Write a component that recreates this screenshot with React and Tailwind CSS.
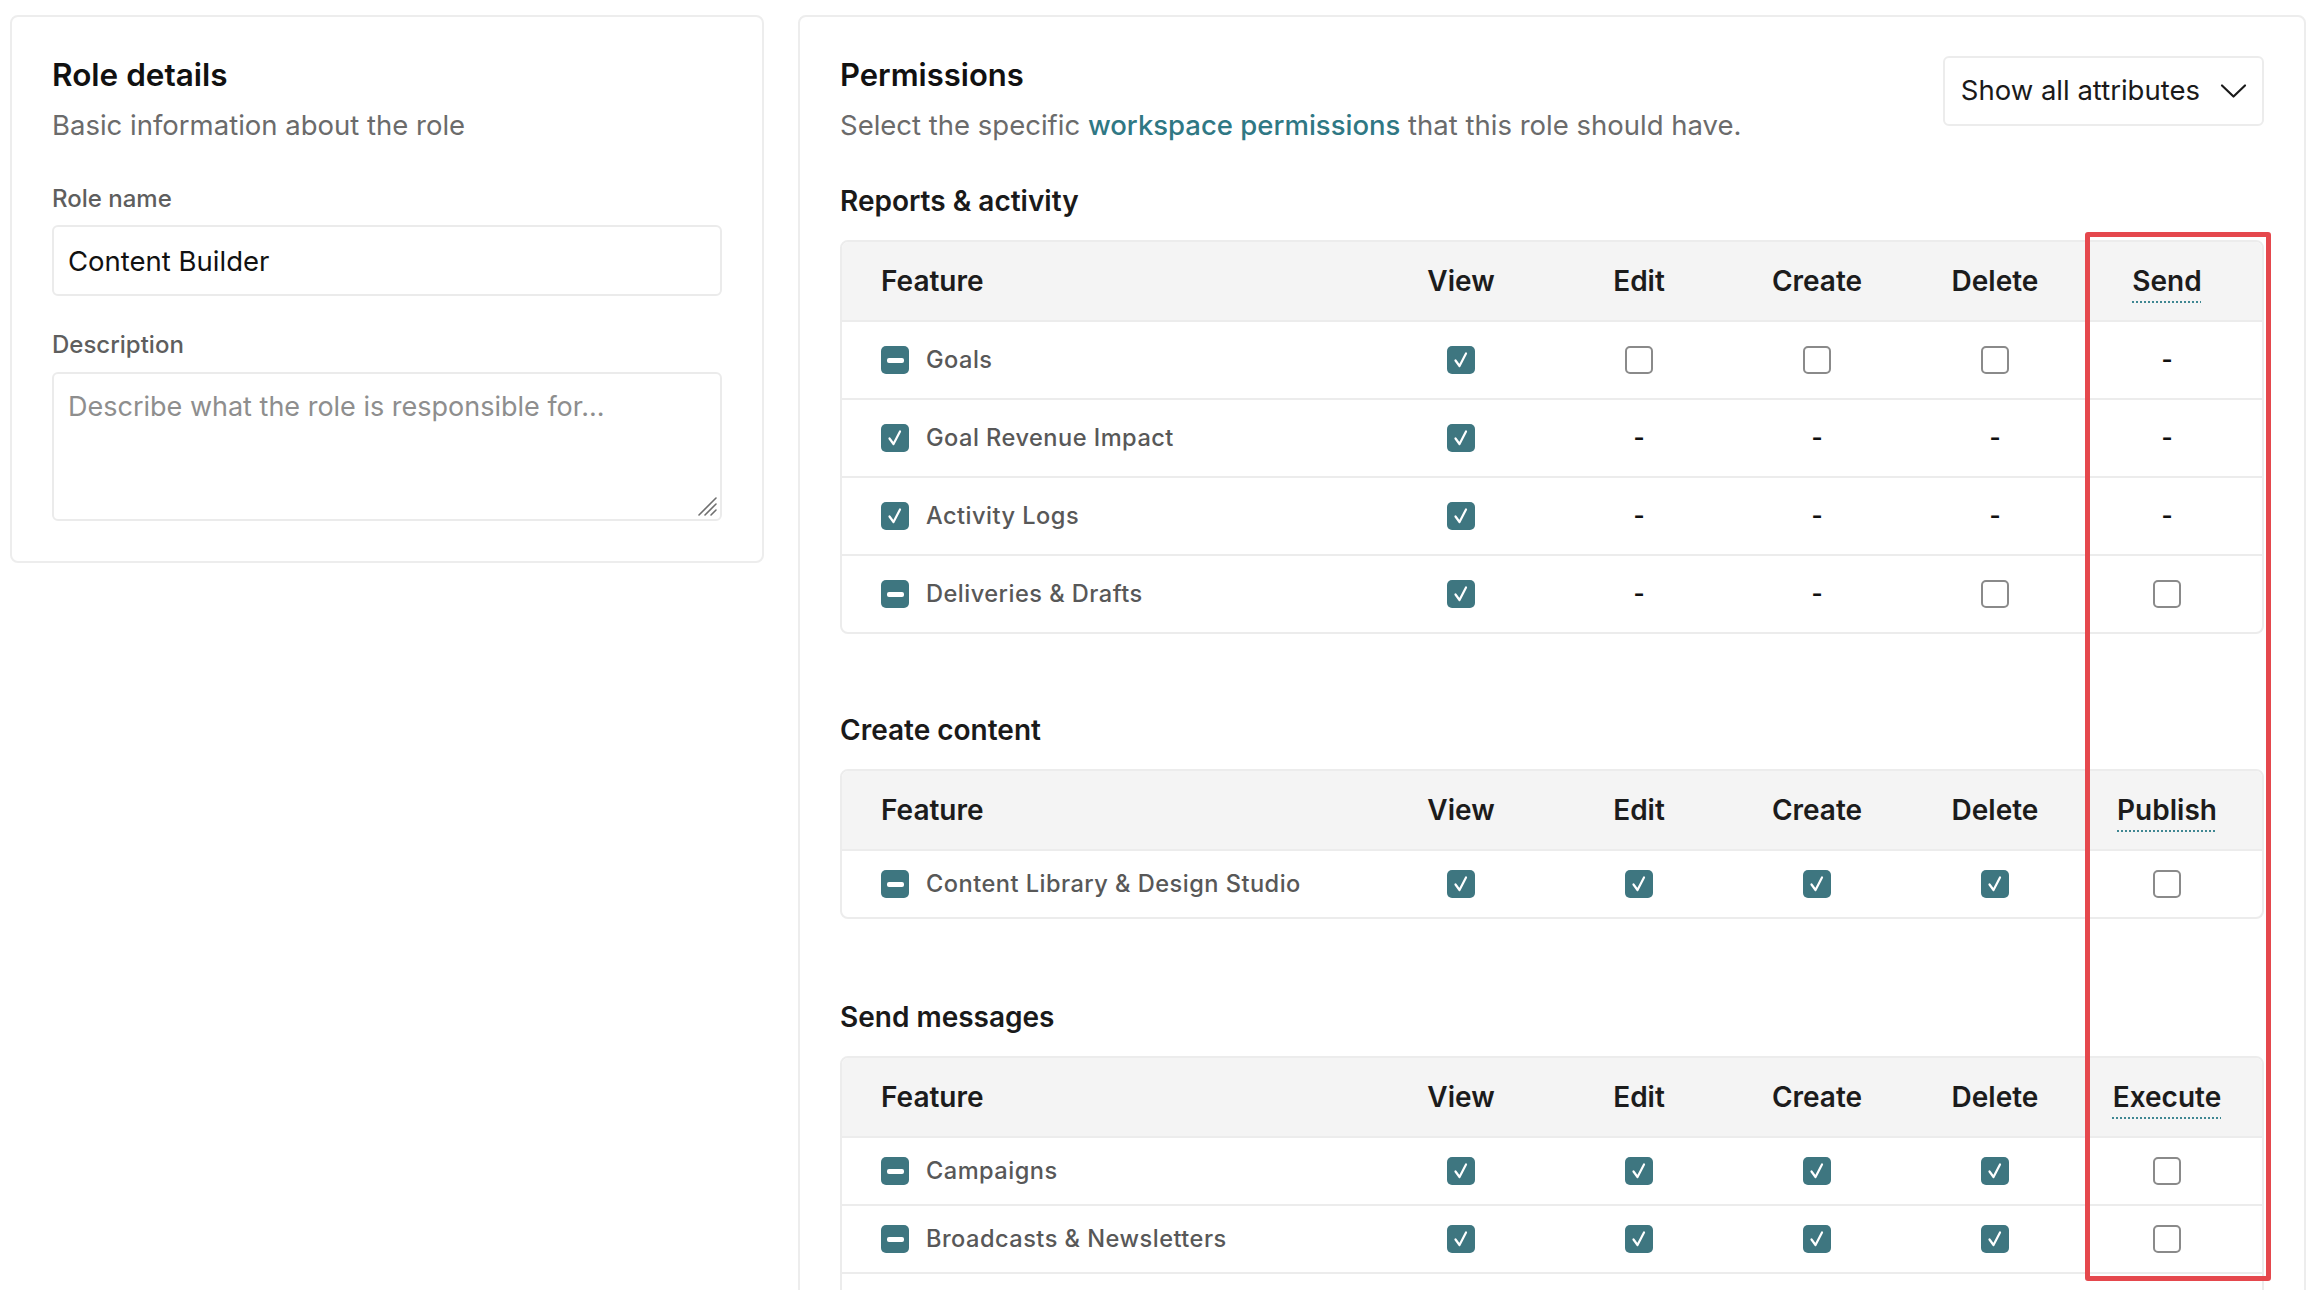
const sections = [
  {
    title: "Reports & activity",
    extra: "Send",
    tall: true,
    rows: [
      { name: "Goals", state: "mixed", cells: ["on", "off", "off", "off", "na"] },
      { name: "Goal Revenue Impact", state: "on", cells: ["on", "na", "na", "na", "na"] },
      { name: "Activity Logs", state: "on", cells: ["on", "na", "na", "na", "na"] },
      { name: "Deliveries & Drafts", state: "mixed", cells: ["on", "na", "na", "off", "off"] },
    ],
  },
  {
    title: "Create content",
    extra: "Publish",
    rows: [{ name: "Content Library & Design Studio", state: "mixed", cells: ["on", "on", "on", "on", "off"] }],
  },
  {
    title: "Send messages",
    extra: "Execute",
    more: true,
    rows: [
      { name: "Campaigns", state: "mixed", cells: ["on", "on", "on", "on", "off"] },
      { name: "Broadcasts & Newsletters", state: "mixed", cells: ["on", "on", "on", "on", "off"] },
    ],
  },
];

function Box({ state }) {
  if (state === "na") return <span className="text-[24px] leading-none font-semibold text-[#111]">-</span>;
  if (state === "off")
    return <span className="block w-[28px] h-[28px] rounded-[5px] border-2 border-[#8a8a8a] bg-white" />;
  return (
    <span className="flex items-center justify-center w-[28px] h-[28px] rounded-[5px] bg-[#3e7680]">
      {state === "mixed" ? (
        <span className="block w-[17px] h-[5px] rounded-[2px] bg-white" />
      ) : (
        <svg width="18" height="20" viewBox="0 0 18 20" fill="none">
          <path d="M3.5 10.5 L7.5 16 L14 3.5" stroke="white" strokeWidth="2.2" strokeLinecap="round" strokeLinejoin="round" />
        </svg>
      )}
    </span>
  );
}

function Table({ section }) {
  const rowH = section.tall ? "h-[76px]" : "h-[66px]";
  return (
    <div className="border-2 border-[#ececec] rounded-[8px] overflow-hidden">
      <div className="flex h-[78px] bg-[#f4f4f4] text-[28px] font-semibold text-[#1c1c1c]">
        <div className="flex-1 flex items-center pl-[39px]">Feature</div>
        {["View", "Edit", "Create", "Delete"].map((h) => (
          <div key={h} className="w-[178px] flex items-center justify-center">{h}</div>
        ))}
        <div className="w-[178px] flex items-center justify-center pr-[12px]">
          <span className="underline decoration-dotted decoration-[#3f8792] decoration-2 underline-offset-[10px]">{section.extra}</span>
        </div>
      </div>
      {section.rows.map((r) => (
        <div key={r.name} className={`flex ${rowH} border-t-2 border-[#ececec] box-content`}>
          <div className="flex-1 flex items-center gap-[17px] pl-[39px] text-[23.6px] font-medium tracking-[0.02em] text-[#585858]">
            <Box state={r.state} />
            {r.name}
          </div>
          {r.cells.map((c, i) => (
            <div key={i} className={`w-[178px] flex items-center justify-center ${i === 4 ? "pr-[12px]" : ""}`}>
              <Box state={c} />
            </div>
          ))}
        </div>
      ))}
      {section.more && <div className="h-[66px] border-t-2 border-[#ececec] box-content" />}
    </div>
  );
}

export default function App() {
  return (
    <div className="min-h-screen bg-white flex items-start gap-[34px] pl-[10px] pr-[16px] pt-[15px] font-['Inter',sans-serif] text-[#1a1a1a]">
      {/* Role details */}
      <div className="w-[754px] shrink-0 border-2 border-[#ededed] rounded-[8px] px-[40px] pt-[38px] pb-[40px]">
        <h2 className="text-[31.5px] leading-[40px] font-semibold text-[#111]">Role details</h2>
        <p className="mt-[12px] text-[27.5px] leading-[36px] text-[#6b6b6b]">Basic information about the role</p>
        <label className="block mt-[40px] text-[24px] leading-[32px] font-medium text-[#5e5e5e]">Role name</label>
        <input
          defaultValue="Content Builder"
          className="mt-[10px] w-full h-[71px] border-2 border-[#ebebeb] rounded-[6px] px-[14px] text-[27.5px] text-[#111] outline-none"
        />
        <label className="block mt-[33px] text-[24px] leading-[32px] font-medium text-[#5e5e5e]">Description</label>
        <div className="relative mt-[11px]">
          <textarea
            placeholder="Describe what the role is responsible for..."
            className="block w-full h-[149px] resize-none border-2 border-[#ebebeb] rounded-[6px] px-[14px] pt-[15px] text-[27px] leading-[36px] text-[#111] placeholder:text-[#8e8e8e] outline-none"
          />
          <svg className="absolute right-[4px] bottom-[4px]" width="22" height="22" viewBox="0 0 22 22" stroke="#6f6f6f" strokeWidth="1.6" strokeLinecap="round">
            <line x1="20" y1="3" x2="3" y2="20" />
            <line x1="20" y1="9" x2="9" y2="20" />
            <line x1="20" y1="15" x2="15" y2="20" />
          </svg>
        </div>
      </div>

      {/* Permissions */}
      <div className="relative flex-1 border-2 border-[#ededed] rounded-[8px] px-[40px] pt-[38px] pb-[40px]">
        <div className="flex items-start justify-between">
          <div>
            <h2 className="text-[31px] leading-[40px] font-semibold text-[#111]">Permissions</h2>
            <p className="mt-[12px] text-[27.5px] leading-[36px] text-[#6b6b6b]">
              Select the specific <span className="font-medium text-[#2f7884]">workspace permissions</span> that this role should have.
            </p>
          </div>
          <button className="mt-[1px] h-[70px] flex items-center gap-[20px] border-2 border-[#ececec] rounded-[6px] pl-[16px] pr-[15px] text-[27.5px] text-[#1a1a1a]">
            Show all attributes
            <svg width="27" height="16" viewBox="0 0 27 16" fill="none" stroke="#1a1a1a" strokeWidth="2.2" strokeLinecap="round" strokeLinejoin="round">
              <path d="M2 2.5 L13.5 13.5 L25 2.5" />
            </svg>
          </button>
        </div>

        {sections.map((s, i) => (
          <div key={s.title} className={i === 0 ? "mt-[40px]" : i === 1 ? "mt-[78px]" : "mt-[80px]"}>
            <h3 className="text-[28px] leading-[36px] font-semibold text-[#1a1a1a]">{s.title}</h3>
            <div className="mt-[21px]">
              <Table section={s} />
            </div>
          </div>
        ))}

        {/* highlight */}
        <div className="absolute left-[1285px] top-[215px] w-[186px] h-[1049px] border-[5px] border-[#e5484d] rounded-[3px] pointer-events-none" />
      </div>
    </div>
  );
}
